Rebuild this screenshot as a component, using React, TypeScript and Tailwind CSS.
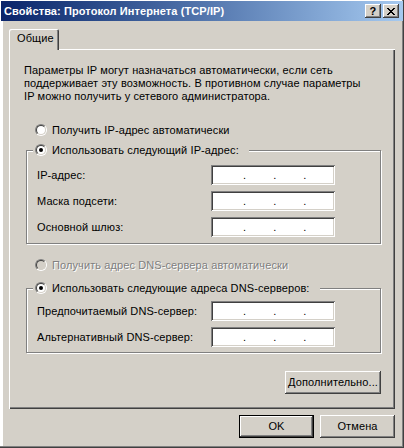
import React from "react";

const raised =
  "shadow-[inset_-1px_-1px_#404040,inset_1px_1px_#ffffff,inset_-2px_-2px_#808080]";
const sunken =
  "shadow-[inset_1px_1px_#808080,inset_-1px_-1px_#ffffff,inset_2px_2px_#404040,inset_-2px_-2px_#d4d0c8]";

function Radio({ checked, disabled }: { checked?: boolean; disabled?: boolean }) {
  return (
    <span className="flex h-[12px] w-[12px] shrink-0 items-center justify-center rounded-full border border-t-[#808080] border-l-[#808080] border-r-white border-b-white">
      <span
        className={
          "flex h-[10px] w-[10px] items-center justify-center rounded-full border border-t-[#404040] border-l-[#404040] border-r-[#d4d0c8] border-b-[#d4d0c8] " +
          (disabled ? "bg-[#d4d0c8]" : "bg-white")
        }
      >
        {checked && <span className="h-[4px] w-[4px] rounded-full bg-black" />}
      </span>
    </span>
  );
}

function IpBox() {
  return (
    <div className={"flex h-[20px] w-[124px] items-center gap-[27px] bg-white pl-[32px] leading-none " + sunken}>
      <span>.</span>
      <span>.</span>
      <span>.</span>
    </div>
  );
}

function Field({ label }: { label: string }) {
  return (
    <div className="flex h-[20px] items-center pl-[10px]">
      <span className="w-[174px]">{label}</span>
      <IpBox />
    </div>
  );
}

function Group({
  legend,
  children,
  pad,
}: {
  legend: string;
  children: React.ReactNode;
  pad: string;
}) {
  return (
    <fieldset
      className={
        "ml-[2px] w-[355px] border border-[#808080] px-0 shadow-[inset_1px_1px_#ffffff,1px_1px_#ffffff] " + pad
      }
    >
      <legend className="ml-[6px] bg-[#d4d0c8] pl-[2px] pr-[10px]">
        <div className="flex h-[14px] items-center gap-[5px]">
          <Radio checked />
          <span>{legend}</span>
        </div>
      </legend>
      <div className="flex flex-col gap-[6px]">{children}</div>
    </fieldset>
  );
}

function XGlyph() {
  const px: [number, number, number][] = [
    [0, 0, 2], [6, 0, 2],
    [1, 1, 2], [5, 1, 2],
    [2, 2, 4],
    [3, 3, 2],
    [2, 4, 4],
    [1, 5, 2], [5, 5, 2],
    [0, 6, 2], [6, 6, 2],
  ];
  return (
    <svg width="8" height="7" viewBox="0 0 8 7" shapeRendering="crispEdges">
      {px.map(([x, y, w], i) => (
        <rect key={i} x={x} y={y} width={w} height={1} fill="#000" />
      ))}
    </svg>
  );
}

export default function App(): JSX.Element {
  return (
    <div className="h-[448px] w-[404px] bg-[#d4d0c8] p-[1px] font-['Liberation_Sans',Arial,sans-serif] text-[11px] leading-[13px] tracking-[0.1px] text-black shadow-[inset_-1px_-1px_#404040,inset_-2px_-2px_#808080,inset_3px_3px_#ffffff,inset_2px_2px_#d4d0c8]">
      {/* title bar */}
      <div className="flex h-[20px] w-[402px] items-center justify-between bg-gradient-to-r from-[#0a246a] to-[#a6caf0] pl-[3px] pr-[4px]">
        <span className="font-bold text-white">Свойства: Протокол Интернета (TCP/IP)</span>
        <div className="flex gap-[2px]">
          <div className={"flex h-[14px] w-[16px] items-center justify-center bg-[#d4d0c8] text-[11px] font-bold leading-none " + raised}>
            ?
          </div>
          <div className={"flex h-[14px] w-[16px] items-center justify-center bg-[#d4d0c8] " + raised}>
            <XGlyph />
          </div>
        </div>
      </div>

      {/* tab */}
      <div className="ml-[8px] mt-[8px]">
        <div className="relative z-10 -mb-[1px] flex h-[21px] w-[50px] items-center rounded-tl-[2px] rounded-tr-[2px] bg-[#d4d0c8] pb-[2px] pl-[8px] shadow-[inset_1px_1px_#ffffff,inset_-1px_0_#404040,inset_-2px_0_#808080]">
          Общие
        </div>
        <div className="h-[360px] w-[386px] pl-[15px] pt-[15px] shadow-[inset_1px_1px_#ffffff,inset_-1px_-1px_#404040,inset_-2px_-2px_#808080]">
          <p>
            Параметры IP могут назначаться автоматически, если сеть
            <br />
            поддерживает эту возможность. В противном случае параметры
            <br />
            IP можно получить у сетевого администратора.
          </p>

          <div className="ml-[11px] mt-[20px] flex h-[14px] items-center gap-[5px]">
            <Radio />
            <span>Получить IP-адрес автоматически</span>
          </div>

          <div className="mt-[6px]">
            <Group legend="Использовать следующий IP-адрес:" pad="pt-[8px] pb-[6px]">
              <Field label="IP-адрес:" />
              <Field label="Маска подсети:" />
              <Field label="Основной шлюз:" />
            </Group>
          </div>

          <div className="ml-[11px] mt-[14px] flex h-[14px] items-center gap-[5px]">
            <Radio disabled />
            <span className="text-[#808080] [text-shadow:1px_1px_0_#ffffff]">
              Получить адрес DNS-сервера автоматически
            </span>
          </div>

          <div className="mt-[9px]">
            <Group legend="Использовать следующие адреса DNS-серверов:" pad="pt-[6px] pb-[5px]">
              <Field label="Предпочитаемый DNS-сервер:" />
              <Field label="Альтернативный DNS-сервер:" />
            </Group>
          </div>

          <div className="ml-[2px] mt-[18px] flex w-[355px] justify-end">
            <button type="button" className={"h-[23px] w-[96px] bg-[#d4d0c8] " + raised}>
              Дополнительно...
            </button>
          </div>
        </div>
      </div>

      {/* dialog buttons */}
      <div className="ml-[8px] mt-[6px] flex w-[386px] justify-end gap-[6px]">
        <button type="button" className={"h-[23px] w-[75px] border border-black bg-[#d4d0c8] " + raised}>
          OK
        </button>
        <button type="button" className={"h-[23px] w-[75px] bg-[#d4d0c8] " + raised}>
          Отмена
        </button>
      </div>
    </div>
  );
}
